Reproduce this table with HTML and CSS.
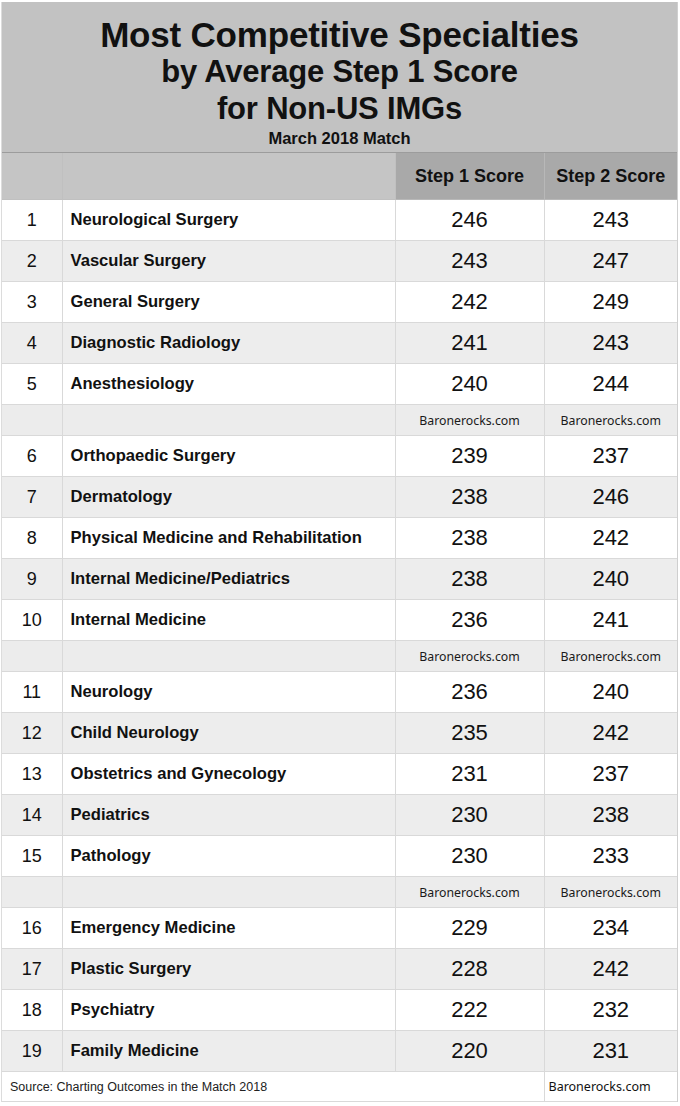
FILE: index.html
```
<!DOCTYPE html>
<html>
<head>
<meta charset="utf-8">
<link rel="stylesheet" href="styles.css">
</head>
<body>
<div class="sheet">
  <div class="title">
    <div class="t1">Most Competitive Specialties</div>
    <div class="t2">by Average Step 1 Score</div>
    <div class="t3">for Non-US IMGs</div>
    <div class="t4">March 2018 Match</div>
  </div>
  <table class="grid">
    <colgroup>
      <col class="c-num"><col class="c-name"><col class="c-s1"><col class="c-s2">
    </colgroup>
    <thead>
      <tr class="head"><th></th><th></th><th class="step">Step 1 Score</th><th class="step">Step 2 Score</th></tr>
    </thead>
    <tbody>
      <tr class="w"><td class="n">1</td><td class="sp">Neurological Surgery</td><td class="s">246</td><td class="s">243</td></tr>
      <tr class="g"><td class="n">2</td><td class="sp">Vascular Surgery</td><td class="s">243</td><td class="s">247</td></tr>
      <tr class="w"><td class="n">3</td><td class="sp">General Surgery</td><td class="s">242</td><td class="s">249</td></tr>
      <tr class="g"><td class="n">4</td><td class="sp">Diagnostic Radiology</td><td class="s">241</td><td class="s">243</td></tr>
      <tr class="w"><td class="n">5</td><td class="sp">Anesthesiology</td><td class="s">240</td><td class="s">244</td></tr>
      <tr class="mark"><td></td><td></td><td class="wm">Baronerocks.com</td><td class="wm">Baronerocks.com</td></tr>
      <tr class="w"><td class="n">6</td><td class="sp">Orthopaedic Surgery</td><td class="s">239</td><td class="s">237</td></tr>
      <tr class="g"><td class="n">7</td><td class="sp">Dermatology</td><td class="s">238</td><td class="s">246</td></tr>
      <tr class="w"><td class="n">8</td><td class="sp">Physical Medicine and Rehabilitation</td><td class="s">238</td><td class="s">242</td></tr>
      <tr class="g"><td class="n">9</td><td class="sp">Internal Medicine/Pediatrics</td><td class="s">238</td><td class="s">240</td></tr>
      <tr class="w"><td class="n">10</td><td class="sp">Internal Medicine</td><td class="s">236</td><td class="s">241</td></tr>
      <tr class="mark"><td></td><td></td><td class="wm">Baronerocks.com</td><td class="wm">Baronerocks.com</td></tr>
      <tr class="w"><td class="n">11</td><td class="sp">Neurology</td><td class="s">236</td><td class="s">240</td></tr>
      <tr class="g"><td class="n">12</td><td class="sp">Child Neurology</td><td class="s">235</td><td class="s">242</td></tr>
      <tr class="w"><td class="n">13</td><td class="sp">Obstetrics and Gynecology</td><td class="s">231</td><td class="s">237</td></tr>
      <tr class="g"><td class="n">14</td><td class="sp">Pediatrics</td><td class="s">230</td><td class="s">238</td></tr>
      <tr class="w"><td class="n">15</td><td class="sp">Pathology</td><td class="s">230</td><td class="s">233</td></tr>
      <tr class="mark"><td></td><td></td><td class="wm">Baronerocks.com</td><td class="wm">Baronerocks.com</td></tr>
      <tr class="w"><td class="n">16</td><td class="sp">Emergency Medicine</td><td class="s">229</td><td class="s">234</td></tr>
      <tr class="g"><td class="n">17</td><td class="sp">Plastic Surgery</td><td class="s">228</td><td class="s">242</td></tr>
      <tr class="w"><td class="n">18</td><td class="sp">Psychiatry</td><td class="s">222</td><td class="s">232</td></tr>
      <tr class="g"><td class="n">19</td><td class="sp">Family Medicine</td><td class="s">220</td><td class="s">231</td></tr>
      <tr class="foot"><td colspan="3" class="src">Source: Charting Outcomes in the Match 2018</td><td class="brand">Baronerocks.com</td></tr>
    </tbody>
  </table>
</div>
</body>
</html>
```
FILE: styles.css
```
html, body {
  margin: 0;
  padding: 0;
  background: #ffffff;
}
body {
  font-family: "Liberation Sans", Arial, sans-serif;
  color: #111111;
}
.sheet {
  width: 677px;
  margin: 2px 0 0 1px;
  border-left: 1px solid #dcdcdc;
  border-right: 1px solid #cfcfcf;
  box-sizing: border-box;
}
.title {
  background: #c2c2c2;
  height: 151px;
  box-sizing: border-box;
  border-bottom: 1px solid #9c9c9c;
  text-align: center;
  font-weight: bold;
  padding-top: 14px;
}
.t1 {
  font-size: 35px;
  line-height: 38px;
  letter-spacing: -0.2px;
}
.t2 {
  font-size: 31px;
  line-height: 36px;
  letter-spacing: -0.2px;
}
.t3 {
  font-size: 31px;
  line-height: 38px;
  letter-spacing: -0.2px;
}
.t4 {
  font-size: 16.5px;
  line-height: 20px;
}
.grid {
  width: 675px;
  border-collapse: collapse;
  table-layout: fixed;
}
.c-num { width: 60px; }
.c-name { width: 333px; }
.c-s1 { width: 149px; }
.c-s2 { width: 133px; }
.grid td, .grid th {
  border: 1px solid #d9d9d9;
  padding: 0;
}
.grid tr > *:first-child { border-left: none; }
.grid tr > *:last-child { border-right: none; }
.head th {
  background: #c5c5c5;
  height: 45px;
  border-top: none;
  border-color: #c0c0c0;
  font-size: 18px;
  font-weight: bold;
  text-align: center;
  padding-top: 1px;
}
.head th.step {
  background: #a9a9a9;
  border-color: #b8b8b8;
}
.w td { background: #ffffff; height: 40px; }
.g td { background: #ededed; height: 40px; }
.mark td { background: #ececec; height: 30px; }
.n {
  text-align: center;
  font-size: 18px;
}
.sp {
  padding-left: 8px !important;
  font-size: 16.6px;
  font-weight: bold;
}
.s {
  text-align: center;
  font-size: 22px;
}
.wm {
  text-align: center;
  font-family: "Noto Sans", "DejaVu Sans", sans-serif;
  font-size: 12.3px;
  color: #1a1a1a;
}
.foot td {
  background: #ffffff;
  height: 29px;
  border-bottom: 1px solid #d9d9d9;
}
.src {
  padding-left: 8px !important;
  font-size: 12.5px;
  color: #222222;
}
.brand {
  padding-left: 4px !important;
  font-family: "Noto Sans", "DejaVu Sans", sans-serif;
  font-size: 12.5px;
  color: #111111;
}
```
